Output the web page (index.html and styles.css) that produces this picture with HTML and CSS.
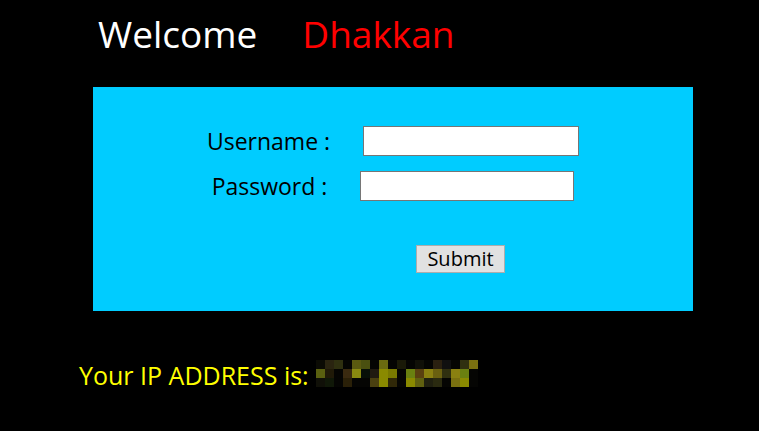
FILE: index.html
```html
<!DOCTYPE html>
<html>
<head>
<meta charset="utf-8">
<link rel="stylesheet" href="styles.css">
</head>
<body>
<div class="header"><span class="welcome">Welcome</span><span class="name">Dhakkan</span></div>
<div class="box">
  <form class="form">
    <div class="row row-user"><label class="label">Username :</label><input class="field field-user" type="text"></div>
    <div class="row row-pass"><label class="label">Password :</label><input class="field field-pass" type="text"></div>
    <div class="row row-submit"><button class="submit" type="button">Submit</button></div>
  </form>
</div>
<div class="ip">
  <span class="ip-text">Your IP ADDRESS is:</span>
  <div class="pix">
    <i style="background:#0b0b04"></i><i style="background:#2a2410"></i><i style="background:#2f3010"></i><i style="background:#050503"></i><i style="background:#5a5a10"></i><i style="background:#4a5010"></i><i style="background:#050503"></i><i style="background:#6a6a10"></i><i style="background:#050503"></i><i style="background:#1a1a08"></i><i style="background:#050503"></i><i style="background:#101008"></i><i style="background:#050503"></i><i style="background:#2a2010"></i><i style="background:#101010"></i><i style="background:#050503"></i><i style="background:#303010"></i><i style="background:#7a7010"></i>
    <i style="background:#5a6010"></i><i style="background:#201a08"></i><i style="background:#050503"></i><i style="background:#3a2a10"></i><i style="background:#8a8a10"></i><i style="background:#081008"></i><i style="background:#201a10"></i><i style="background:#8a8a00"></i><i style="background:#7a7a00"></i><i style="background:#050503"></i><i style="background:#6a8010"></i><i style="background:#5a4010"></i><i style="background:#8a8010"></i><i style="background:#6a6010"></i><i style="background:#303010"></i><i style="background:#8a8010"></i><i style="background:#6a8010"></i><i style="background:#050503"></i>
    <i style="background:#101008"></i><i style="background:#101808"></i><i style="background:#050503"></i><i style="background:#2a2008"></i><i style="background:#050503"></i><i style="background:#050503"></i><i style="background:#4a4010"></i><i style="background:#8a8a00"></i><i style="background:#302808"></i><i style="background:#050503"></i><i style="background:#8a8a00"></i><i style="background:#606010"></i><i style="background:#202010"></i><i style="background:#2a2a10"></i><i style="background:#050503"></i><i style="background:#7a7010"></i><i style="background:#8a8a00"></i><i style="background:#050503"></i>
  </div>
</div>
</body>
</html>
```
FILE: styles.css
```css
html, body {
  margin: 0;
  padding: 0;
  background: #000;
}
body {
  font-family: "Open Sans", "Noto Sans", sans-serif;
  width: 759px;
  height: 431px;
  overflow: hidden;
}
.header {
  display: flex;
  gap: 45px;
  padding: 9px 0 0 98px;
  height: 87px;
  box-sizing: border-box;
  font-size: 37px;
  line-height: 50px;
}
.welcome { color: #fff; }
.name { color: #f00; }
.box {
  margin-left: 93px;
  width: 600px;
  height: 224px;
  background: #00ccff;
  box-sizing: border-box;
  padding-top: 39px;
}
.form {
  margin: 0;
  display: flex;
  flex-direction: column;
}
.row {
  display: flex;
  justify-content: center;
  align-items: center;
  gap: 33px;
  height: 30px;
}
.row-pass { margin-top: 15px; }
.row-submit { margin-top: 44px; height: 28px; }
.label {
  font-size: 23px;
  color: #000;
  line-height: 30px;
}
.field {
  box-sizing: border-box;
  height: 30px;
  border: 1px solid #767676;
  background: #fff;
  padding: 0;
  margin: 0;
}
.field-user { width: 216px; }
.field-pass { width: 214px; }
.submit {
  margin-left: 135px;
  width: 89px;
  height: 28px;
  box-sizing: border-box;
  border: 1px solid #adadad;
  background: #e1e1e1;
  font-family: inherit;
  font-size: 20px;
  line-height: 26px;
  padding: 0;
  color: #000;
}
.ip {
  margin-top: 49px;
  padding-left: 79px;
  display: flex;
  align-items: flex-start;
}
.ip-text {
  color: #ffff00;
  font-size: 25px;
  line-height: 30px;
}
.pix {
  margin-left: 7px;
  display: grid;
  grid-template-columns: repeat(18, 9px);
  grid-auto-rows: 9px;
}
.pix i { display: block; }
```
